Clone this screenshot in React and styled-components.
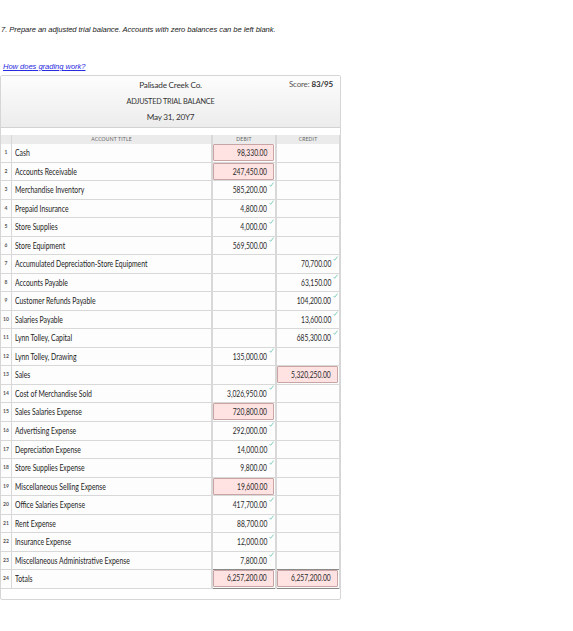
import React from "react";
import styled, { createGlobalStyle } from "styled-components";

const Global = createGlobalStyle`
  html, body { margin: 0; padding: 0; background: #fff; }
  body { width: 573px; height: 631px; overflow: hidden; font-family: Lato, "Liberation Sans", Arial, sans-serif; }
`;

const Page = styled.div`
  padding: 25px 0 0 0;
  width: 341px;
`;
const Prompt = styled.p`
  margin: 0 0 0 1px;
  width: 400px;
  font: italic 7.6px/10px "Liberation Sans", Arial, sans-serif;
  color: #222;
  white-space: nowrap;
  letter-spacing: -0.06px;
`;
const Help = styled.a`
  display: block;
  margin: 27px 0 0 3px;
  font: italic 7.6px/10px "Liberation Sans", Arial, sans-serif;
  color: #2a2ae0;
  text-decoration: underline;
  letter-spacing: -0.05px;
`;
const Panel = styled.div`
  margin-top: 3px;
  width: 341px;
  height: 525px;
  box-sizing: border-box;
  border: 1px solid #d6d6d6;
  border-radius: 2px;
  background: #fff;
`;
const Head = styled.div`
  position: relative;
  height: 52px;
  box-sizing: border-box;
  padding-top: 1px;
  border-bottom: 1px solid #d2d2d2;
  background: linear-gradient(#fdfdfd, #ececec);
  display: flex;
  flex-direction: column;
  align-items: center;
`;
const HeadLine = styled.div`
  height: 16px;
  line-height: 16px;
  font-size: 8.2px;
  letter-spacing: -0.22px;
  color: #333;
  transform: ${p => (p.$caps ? "scaleX(.89)" : "none")};
`;
const Score = styled.div`
  position: absolute;
  top: 2px;
  right: 7px;
  font-size: 8px;
  line-height: 12px;
  letter-spacing: -0.15px;
  color: #555;
  b { font-weight: 700; color: #333; }
`;
const Grid = styled.div`
  margin-top: 7px;
  display: grid;
  grid-template-columns: 9px 199px 62px 62px;
  column-gap: 2px;
  background: #d8d8d8;
  width: 339px;
`;
const Th = styled.div`
  height: 9px;
  line-height: 8px;
  background: #ebebeb;
  font-size: 5px;
  letter-spacing: 0.2px;
  color: #666;
  text-align: center;
`;
const HeadNum = styled(Th)`
  margin-right: -1px;
`;
const Cell = styled.div`
  position: relative;
  height: 18.54px;
  box-sizing: border-box;
  background: #fdfdfd;
  border-bottom: 1.4px solid #d8d8d8;
  line-height: 17px;
  white-space: nowrap;
`;
const Num = styled(Cell)`
  margin-right: -1px;
  font-size: 5px;
  font-weight: 700;
  text-align: center;
  color: #555;
`;
const Title = styled(Cell)`
  padding-left: 3px;
  font-size: 9.6px;
  color: #1c1c1c;
`;
const TitleText = styled.span`
  display: inline-block;
  transform: scaleX(.715);
  transform-origin: left center;
`;
const Amount = styled(Cell)`
  display: flex;
  justify-content: flex-end;
  padding-right: 8px;
  font-size: 9.6px;
  color: #2a2a2a;
`;
const AmountText = styled.span`
  flex: none;
  transform: scaleX(.7);
  transform-origin: right center;
`;
const Wrong = styled.div`
  display: flex;
  justify-content: flex-end;
  flex: none;
  width: 61px;
  height: 17px;
  margin-right: -7px;
  box-sizing: border-box;
  background: #ffe2e2;
  border: 1px solid #c9a4a4;
  border-radius: 1px;
  padding-right: 6px;
  line-height: 15px;
`;
const Tick = styled.svg`
  position: absolute;
  top: 0.5px;
  right: 1.5px;
  width: 5px;
  height: 5px;
`;
const TotalCell = styled(Amount)`
  height: 19.5px;
  border-top: 1.5px solid #8a8a8a;
  border-bottom: 1.5px solid #8a8a8a;
  margin-top: -1px;
  ${Wrong} { height: 16.5px; line-height: 14.5px; }
`;

const Check = () => (
  <Tick viewBox="0 0 5 5"><path d="M0.6 3 L1.7 4.3 L4.5 0.6" fill="none" stroke="#85cdc0" strokeWidth="1" /></Tick>
);

const rows = [
  ["Cash", "98,330.00", "", "d"],
  ["Accounts Receivable", "247,450.00", "", "d"],
  ["Merchandise Inventory", "585,200.00", ""],
  ["Prepaid Insurance", "4,800.00", ""],
  ["Store Supplies", "4,000.00", ""],
  ["Store Equipment", "569,500.00", ""],
  ["Accumulated Depreciation-Store Equipment", "", "70,700.00"],
  ["Accounts Payable", "", "63,150.00"],
  ["Customer Refunds Payable", "", "104,200.00"],
  ["Salaries Payable", "", "13,600.00"],
  ["Lynn Tolley, Capital", "", "685,300.00"],
  ["Lynn Tolley, Drawing", "135,000.00", ""],
  ["Sales", "", "5,320,250.00", "c"],
  ["Cost of Merchandise Sold", "3,026,950.00", ""],
  ["Sales Salaries Expense", "720,800.00", "", "d"],
  ["Advertising Expense", "292,000.00", ""],
  ["Depreciation Expense", "14,000.00", ""],
  ["Store Supplies Expense", "9,800.00", ""],
  ["Miscellaneous Selling Expense", "19,600.00", "", "d"],
  ["Office Salaries Expense", "417,700.00", ""],
  ["Rent Expense", "88,700.00", ""],
  ["Insurance Expense", "12,000.00", ""],
  ["Miscellaneous Administrative Expense", "7,800.00", ""],
];

const Value = ({ v, bad }) => {
  if (!v) return <Amount />;
  if (bad) return <Amount><Wrong><AmountText>{v}</AmountText></Wrong></Amount>;
  return <Amount><AmountText>{v}</AmountText><Check /></Amount>;
};

export default function App() {
  return (
    <Page>
      <Global />
      <Prompt>7. Prepare an adjusted trial balance. Accounts with zero balances can be left blank.</Prompt>
      <Help href="#">How does grading work?</Help>
      <Panel>
        <Head>
          <HeadLine>Palisade Creek Co.</HeadLine>
          <HeadLine $caps>ADJUSTED TRIAL BALANCE</HeadLine>
          <HeadLine>May 31, 20Y7</HeadLine>
          <Score>Score: <b>83/95</b></Score>
        </Head>
        <Grid>
          <HeadNum />
          <Th>ACCOUNT TITLE</Th>
          <Th>DEBIT</Th>
          <Th>CREDIT</Th>
          {rows.map(([t, d, c, bad], i) => (
            <React.Fragment key={t}>
              <Num>{i + 1}</Num>
              <Title><TitleText>{t}</TitleText></Title>
              <Value v={d} bad={bad === "d"} />
              <Value v={c} bad={bad === "c"} />
            </React.Fragment>
          ))}
          <Num>24</Num>
          <Title><TitleText>Totals</TitleText></Title>
          <TotalCell><Wrong><AmountText>6,257,200.00</AmountText></Wrong></TotalCell>
          <TotalCell><Wrong><AmountText>6,257,200.00</AmountText></Wrong></TotalCell>
        </Grid>
      </Panel>
    </Page>
  );
}
